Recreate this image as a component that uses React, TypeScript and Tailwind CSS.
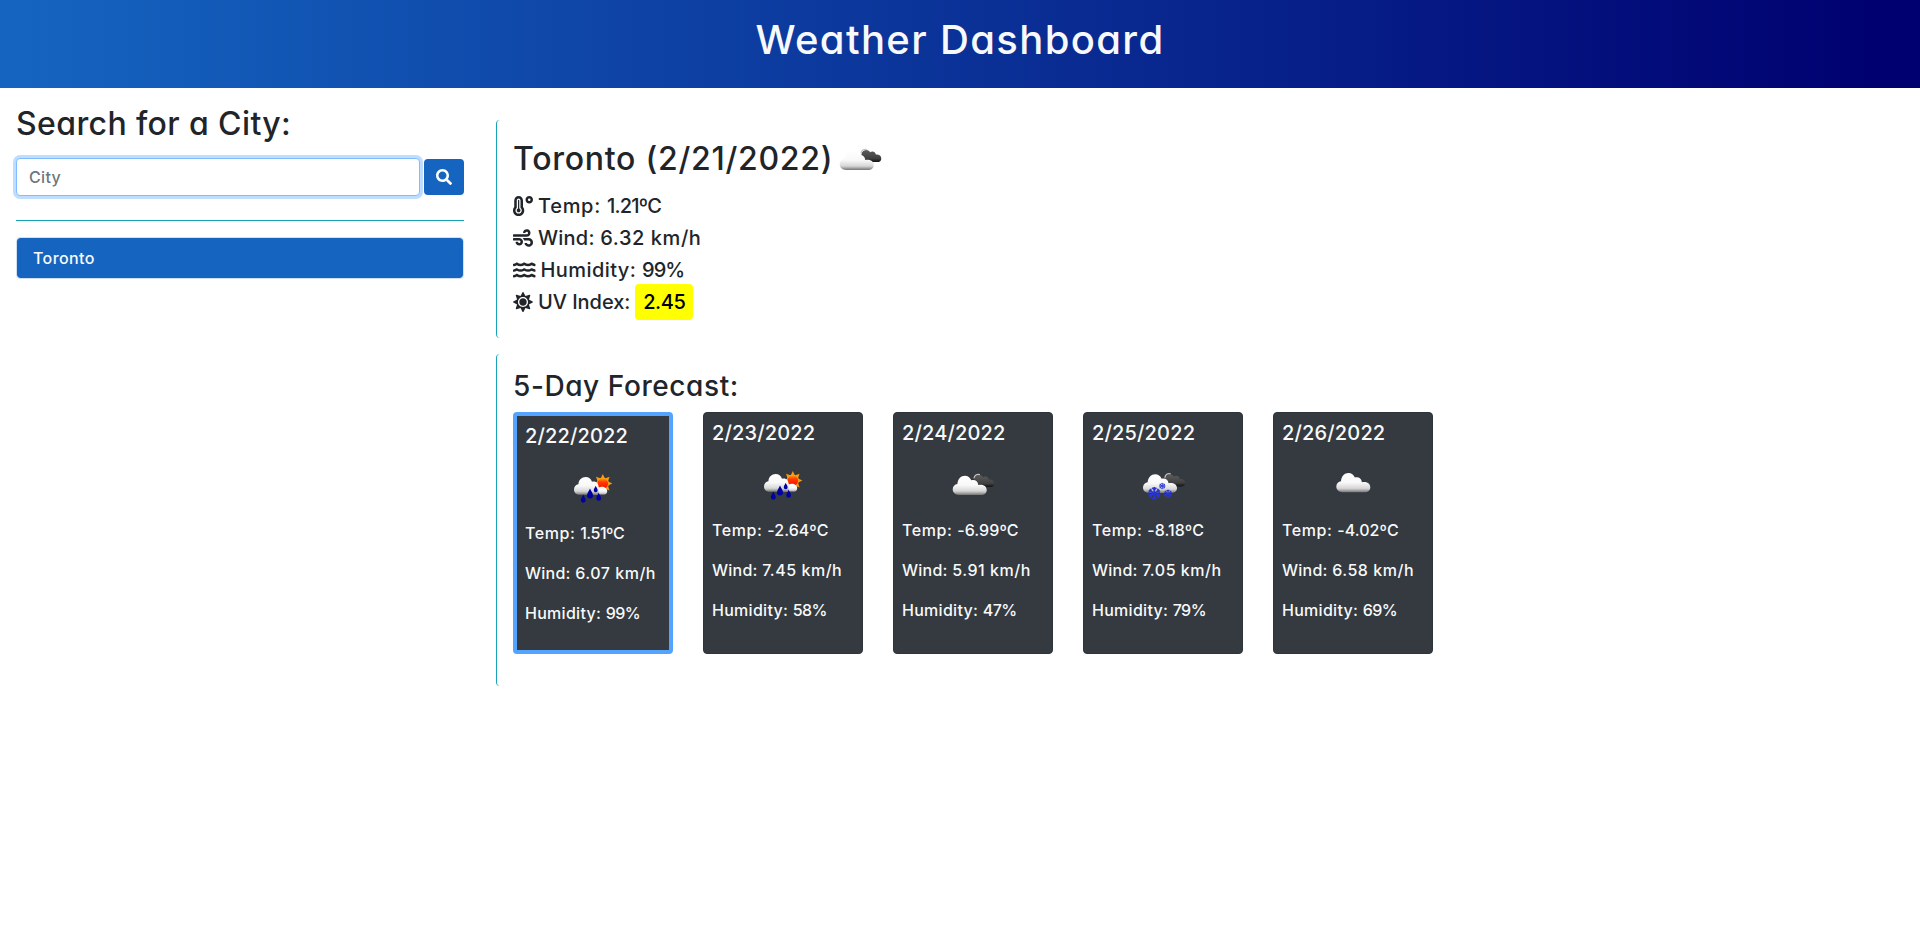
import type { ReactNode } from "react";
import { FaSearch, FaSun, FaTemperatureHigh, FaWater, FaWind } from "react-icons/fa";

type Sky = "sunRain" | "broken" | "snow" | "cloud";

const CLOUD =
  "M6.2 19.2C2.6 19.2 0 17 0 13.6C0 10.6 2 8.6 4.7 8.2C4.9 3.4 8.2 0 12.2 0C15.2 0 17.4 1.8 18.6 4.6C21.6 3.4 25.2 5 25.6 9.2C30 8.4 34 10.4 34 14.2C34 17.4 31.6 19.2 28.4 19.2Z";
const DARK_CLOUD =
  "M2 9.5C0 6 2 2 6 2C8 2 9 3 9.8 4.2C12 2.6 15 3.6 15.6 6.6C18.4 6.2 21 8 21 10.4C21 12.8 19.4 14 17 14H8C5 14 3 12.6 2 9.5Z";
const DROP = "M0 -5C.9 -2.4 3 -.4 3 2A3 3 0 0 1 -3 2C-3 -.4 -.9 -2.4 0 -5Z";

function Gradients() {
  return (
    <svg width="0" height="0" className="absolute" aria-hidden="true">
      <defs>
        <linearGradient id="white-cloud" x1="0" y1="0" x2="0" y2="1">
          <stop offset="0" stopColor="#ffffff" />
          <stop offset=".5" stopColor="#f8f8f8" />
          <stop offset=".8" stopColor="#d6d6d6" />
          <stop offset=".9" stopColor="#a8a8a8" />
          <stop offset="1" stopColor="#777777" />
        </linearGradient>
        <linearGradient id="dark-cloud" x1="0" y1="0" x2="0" y2="1">
          <stop offset="0" stopColor="#5c5c5c" />
          <stop offset=".7" stopColor="#404040" />
          <stop offset="1" stopColor="#111111" />
        </linearGradient>
        <linearGradient id="sun-core" x1="0" y1="0" x2="0" y2="1">
          <stop offset="0" stopColor="#ffa000" />
          <stop offset=".35" stopColor="#ff3b00" />
          <stop offset="1" stopColor="#ff0a00" />
        </linearGradient>
      </defs>
    </svg>
  );
}

function Flake({ x, y, r }: { x: number; y: number; r: number }) {
  return (
    <g transform={`translate(${x} ${y}) scale(${r / 6})`} stroke="#2a35d0" strokeWidth="1.6" fill="none">
      {[0, 60, 120, 180, 240, 300].map((a) => (
        <path key={a} d="M0 0V-6M-2 -5.4L0 -3.4L2 -5.4" transform={`rotate(${a})`} />
      ))}
    </g>
  );
}

function DarkCloud({ x, y }: { x: number; y: number }) {
  return (
    <g transform={`translate(${x} ${y})`}>
      <path d={DARK_CLOUD} fill="url(#dark-cloud)" />
      <path d="M.6 5.4C1.2 2.2 3.4 .6 6.6 1.6" fill="none" stroke="#c4c4c4" strokeWidth="1.2" />
    </g>
  );
}

function WeatherIcon({ sky }: { sky: Sky }) {
  return (
    <svg width="50" height="50" viewBox="0 0 50 50" className="block shrink-0">
      {sky === "cloud" && <path d={CLOUD} transform="translate(8.3 13)" fill="url(#white-cloud)" />}
      {sky === "broken" && (
        <>
          <DarkCloud x={25.3} y={13} />
          <path d={CLOUD} transform="translate(4.7 15.7)" fill="url(#white-cloud)" />
        </>
      )}
      {sky === "snow" && (
        <>
          <DarkCloud x={26.2} y={12.4} />
          <path d={CLOUD} transform="translate(5 14.3) scale(1 .97)" fill="url(#white-cloud)" />
          <Flake x={16.3} y={33.3} r={6.2} />
          <Flake x={24.3} y={26} r={3.1} />
          <Flake x={30} y={33.7} r={4} />
        </>
      )}
      {sky === "sunRain" && (
        <>
          <g transform="translate(34.8 20.6)">
            {[0, 45, 90, 135, 180, 225, 270, 315].map((a) => (
              <path key={a} d="M-2 -5.4L0 -9.6L2 -5.4Z" fill="#f59a12" transform={`rotate(${a})`} />
            ))}
            <circle r="6.1" fill="#ffa51c" />
            <circle r="5.3" fill="url(#sun-core)" />
          </g>
          <path
            d="M26 31.8C23 27 27 22.4 31 24.4C34 22.6 39.6 24.4 39.2 28.4C39 30.8 37.4 31.8 35 31.8Z"
            fill="url(#white-cloud)"
          />
          <path
            d="M12 31.8C8.6 31.8 6 29.8 6 26.4C6 23.6 7.8 21.6 10.4 21.2C10.6 17 13.8 14 17.6 14C20.8 14 23 15.8 24 18.8C27.4 17.6 30.6 20 30.6 24L31 31.8Z"
            fill="url(#white-cloud)"
          />
          <g fill="#0000a4">
            <path d={DROP} transform="translate(22 30.4)" />
            <path d={DROP} transform="translate(27.7 26) scale(.65)" />
            <path d={DROP} transform="translate(15.3 35.6) scale(.82)" />
            <path d={DROP} transform="translate(30.7 33.8) scale(.8)" />
          </g>
        </>
      )}
    </svg>
  );
}

const days: { date: string; sky: Sky; temp: string; wind: string; humidity: string }[] = [
  { date: "2/22/2022", sky: "sunRain", temp: "1.51ºC", wind: "6.07 km/h", humidity: "99%" },
  { date: "2/23/2022", sky: "sunRain", temp: "-2.64ºC", wind: "7.45 km/h", humidity: "58%" },
  { date: "2/24/2022", sky: "broken", temp: "-6.99ºC", wind: "5.91 km/h", humidity: "47%" },
  { date: "2/25/2022", sky: "snow", temp: "-8.18ºC", wind: "7.05 km/h", humidity: "79%" },
  { date: "2/26/2022", sky: "cloud", temp: "-4.02ºC", wind: "6.58 km/h", humidity: "69%" },
];

function Row({ icon, children }: { icon: ReactNode; children: ReactNode }) {
  return (
    <div className="flex h-8 items-center gap-[5px] whitespace-nowrap text-[20px] leading-8">
      {icon}
      {children}
    </div>
  );
}

export default function App() {
  return (
    <div className="min-h-[927px] bg-white font-['Inter',sans-serif] font-medium text-[#212529] [font-feature-settings:'cv11']">
      <Gradients />
      <header className="h-[88px] bg-[linear-gradient(90deg,#1565c0,#000070_98%)] pt-4 text-center">
        <h1 className="text-[40px] leading-[48px] tracking-[0.034em] text-[#f8f9fa]">Weather Dashboard</h1>
      </header>

      <main className="flex">
        <aside className="w-[480px] px-4 pt-[17px]">
          <h2 className="text-[32px] leading-[38.4px] tracking-[0.012em]">Search for a City:</h2>
          <form className="mt-[14.6px] flex items-center gap-1" onSubmit={(e) => e.preventDefault()}>
            <input
              type="text"
              placeholder="City"
              className="h-[38px] w-[404px] rounded border border-[#80bdff] bg-white px-3 text-base tracking-[0.02em] shadow-[0_0_0_3px_#bfdeff] outline-none placeholder:text-[#6c757d] placeholder:opacity-100"
            />
            <button
              type="submit"
              aria-label="Search"
              className="flex h-9 w-10 items-center justify-center rounded bg-[#1565c0] text-white"
            >
              <FaSearch size={16} />
            </button>
          </form>
          <hr className="mt-6 border-t border-[#17a2b8]" />
          <ul className="mt-4">
            <li className="flex h-[42px] items-center rounded border border-[#d0e0f2] bg-[#1565c0] bg-clip-padding px-4 text-base tracking-[0.026em] text-[#f8f9fa]">
              Toronto
            </li>
          </ul>
        </aside>

        <div className="flex flex-col gap-4 pl-4 pt-8">
          <section className="h-[218px] rounded border-l border-[#17a2b8] pl-4 pt-[15px]">
            <div className="flex h-[50px] items-center gap-[2px]">
              <h2 className="whitespace-nowrap pb-px text-[32px] leading-[38.4px] tracking-[0.023em]">
                Toronto (2/21/2022)
              </h2>
              <WeatherIcon sky="broken" />
            </div>
            <div className="mt-[5px]">
              <Row icon={<FaTemperatureHigh size={20} />}>
                <span>
                  <span className="tracking-[0.035em]">Temp: </span>
                  <span className="tracking-[-0.04em]">1.21ºC</span>
                </span>
              </Row>
              <Row icon={<FaWind size={20} />}>
                <span>
                  <span className="tracking-[0.012em]">Wind: </span>
                  <span className="tracking-[0.028em]">6.32 km/h</span>
                </span>
              </Row>
              <Row icon={<FaWater className="h-5 w-[22.5px]" />}>
                <span>
                  <span className="tracking-[0.021em]">Humidity: </span>
                  <span className="tracking-[-0.045em]">99%</span>
                </span>
              </Row>
              <Row icon={<FaSun size={20} />}>
                <span className="tracking-[-0.002em]">UV Index:</span>
                <span className="flex h-9 w-[58px] items-center justify-center rounded bg-[yellow] tracking-[-0.02em] text-black">
                  2.45
                </span>
              </Row>
            </div>
          </section>

          <section className="h-[332px] rounded border-l border-[#17a2b8] pl-4 pt-4">
            <h3 className="text-[28px] leading-[33.6px] tracking-[0.021em]">5-Day Forecast:</h3>
            <div className="mt-[8.4px] flex gap-[30px]">
              {days.map((d, i) => (
                <article
                  key={d.date}
                  className={
                    (i === 0 ? "border-4 border-[#54a4ff]" : "border border-[#2f343a]") +
                    " h-[242px] w-40 whitespace-nowrap rounded bg-[#343a40] p-2 text-base leading-6 text-[#f8f9fa]"
                  }
                >
                  <h4 className="text-[20px] leading-6 tracking-[0.008em]">{d.date}</h4>
                  <div className="mb-2 mt-[15px] flex justify-center">
                    <WeatherIcon sky={d.sky} />
                  </div>
                  <div className="flex flex-col gap-4">
                    <p>
                      <span className="tracking-[0.035em]">Temp: </span>
                      <span className={i === 0 ? "tracking-[-0.03em]" : "tracking-[0.005em]"}>{d.temp}</span>
                    </p>
                    <p>
                      <span className="tracking-[0.015em]">Wind: </span>
                      <span className="tracking-[0.033em]">{d.wind}</span>
                    </p>
                    <p>
                      <span className="tracking-[0.018em]">Humidity: </span>
                      <span className="tracking-[-0.035em]">{d.humidity}</span>
                    </p>
                  </div>
                </article>
              ))}
            </div>
          </section>
        </div>
      </main>
    </div>
  );
}
